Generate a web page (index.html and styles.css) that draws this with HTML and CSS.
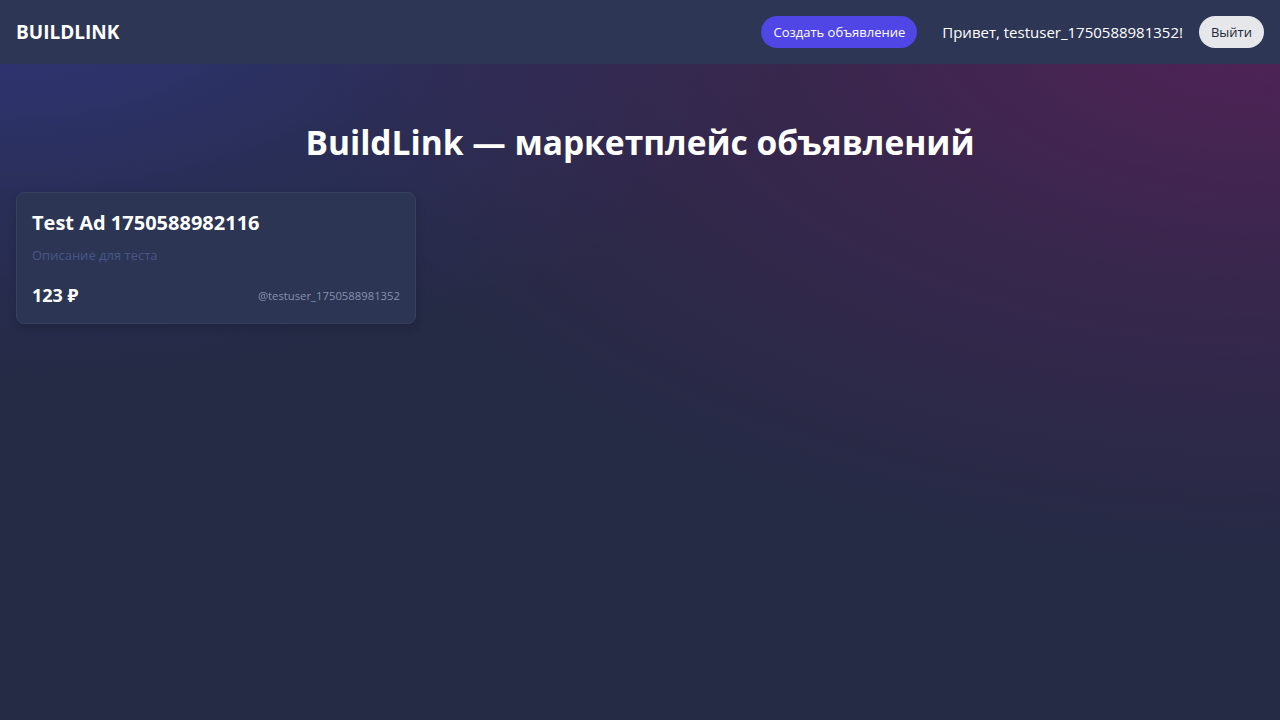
FILE: index.html
```html
<!DOCTYPE html>
<html lang="ru">
<head>
<meta charset="utf-8">
<title>BuildLink</title>
<link rel="stylesheet" href="styles.css">
</head>
<body>
<header class="topbar">
  <div class="logo">BUILDLINK</div>
  <nav class="nav">
    <button class="btn-create">Создать объявление</button>
    <span class="greeting">Привет, testuser_1750588981352!</span>
    <button class="btn-logout">Выйти</button>
  </nav>
</header>
<main class="page">
  <h1 class="title">BuildLink — маркетплейс объявлений</h1>
  <section class="grid">
    <article class="card">
      <h2 class="card-title">Test Ad 1750588982116</h2>
      <p class="card-desc">Описание для теста</p>
      <div class="card-foot">
        <span class="price">123 ₽</span>
        <span class="author">@testuser_1750588981352</span>
      </div>
    </article>
  </section>
</main>
</body>
</html>
```
FILE: styles.css
```css
* { box-sizing: border-box; }
html, body { margin: 0; padding: 0; }
body {
  min-height: 720px;
  font-family: "Open Sans", "Noto Sans", sans-serif;
  color: #fff;
  background:
    radial-gradient(ellipse 1000px 560px at 100% 0%, rgba(108,30,98,0.65) 0%, rgba(108,30,98,0.27) 50%, rgba(108,30,98,0) 100%),
    radial-gradient(ellipse 800px 380px at 0% 0%, rgba(55,60,150,0.65) 0%, rgba(55,60,150,0.22) 55%, rgba(55,60,150,0) 100%),
    #252a45;
}
.topbar {
  height: 64px;
  background: #2d3655;
  display: flex;
  align-items: center;
  justify-content: space-between;
  padding: 0 16px;
}
.logo { font-size: 19px; font-weight: 700; }
.nav { display: flex; align-items: center; }
.btn-create {
  font-family: inherit;
  font-size: 13px;
  color: #fff;
  background: #4f46e5;
  border: none;
  border-radius: 999px;
  height: 32px;
  padding: 0 12px;
}
.greeting { font-size: 15px; margin: 0 16px 0 25px; }
.btn-logout {
  font-family: inherit;
  font-size: 13px;
  color: #1f2937;
  background: #e5e7eb;
  border: none;
  border-radius: 999px;
  height: 32px;
  padding: 0 12px;
}
.page { padding: 0 16px; }
.title {
  margin: 0;
  padding: 56px 0 28px;
  text-align: center;
  font-size: 33.5px;
  line-height: 44px;
  font-weight: 700;
}
.grid {
  display: grid;
  grid-template-columns: repeat(3, 1fr);
  gap: 24px;
}
.card {
  background: #2c3554;
  border: 1px solid #36405f;
  border-radius: 8px;
  padding: 16px 15px 14px;
  box-shadow: 0 4px 10px rgba(0,0,0,0.15);
}
.card-title { margin: 0; font-size: 20px; line-height: 28px; font-weight: 700; }
.card-desc { margin: 8px 0 0; font-size: 13px; line-height: 20px; color: #4a5588; }
.card-foot {
  margin-top: 16px;
  display: flex;
  align-items: center;
  justify-content: space-between;
}
.price { font-size: 18px; font-weight: 700; line-height: 28px; }
.author { font-size: 11.3px; color: #8890b0; }
```
